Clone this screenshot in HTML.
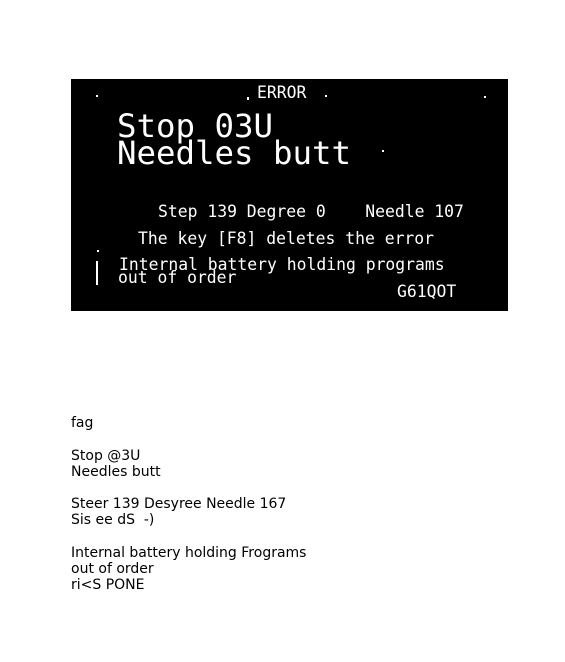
<!DOCTYPE html>
<html><head><meta charset="utf-8"><style>
html,body{margin:0;padding:0;background:#fff;width:565px;height:662px;overflow:hidden;position:relative}
#scr{position:absolute;left:71px;top:79px;width:437px;height:232px;background:#000}
.m{position:absolute;color:#fff;font-family:"DejaVu Sans Mono","Liberation Mono",monospace;white-space:pre;line-height:1}
.s{font-size:16.4px}
.b{font-size:32.4px}
.d{position:absolute;background:#fff;width:2px;height:2px}
.t{position:absolute;left:71px;font-family:"DejaVu Sans","Liberation Sans",sans-serif;font-size:14px;line-height:16px;color:#000;white-space:pre}
</style></head><body>
<div id="scr">
<div class="m s" style="left:186px;top:6px">ERROR</div>
<div class="d" style="left:25px;top:16px"></div>
<div class="d" style="left:176px;top:18px;height:3px"></div>
<div class="d" style="left:254px;top:16px"></div>
<div class="d" style="left:413px;top:17px"></div>
<div class="d" style="left:311px;top:71px"></div>
<div class="d" style="left:26px;top:171px"></div>
<div class="d" style="left:25px;top:182px;height:24px"></div>
<div class="m b" style="left:46px;top:31px">Stop 03U</div>
<div class="m b" style="left:46px;top:58px">Needles butt</div>
<div class="m s" style="left:87px;top:125px">Step 139 Degree 0    Needle 107</div>
<div class="m s" style="left:67px;top:152px">The key [F8] deletes the error</div>
<div class="m s" style="left:48px;top:178px">Internal battery holding programs</div>
<div class="m s" style="left:47px;top:191px">out of order</div>
<div class="m s" style="left:326px;top:205px">G61QOT</div>
</div>
<div class="t" style="top:415px">fag</div>
<div class="t" style="top:448px">Stop @3U
Needles butt</div>
<div class="t" style="top:496px">Steer 139 Desyree Needle 167
Sis ee dS  -)</div>
<div class="t" style="top:545px">Internal battery holding Frograms
out of order
ri&lt;S PONE</div>
</body></html>
